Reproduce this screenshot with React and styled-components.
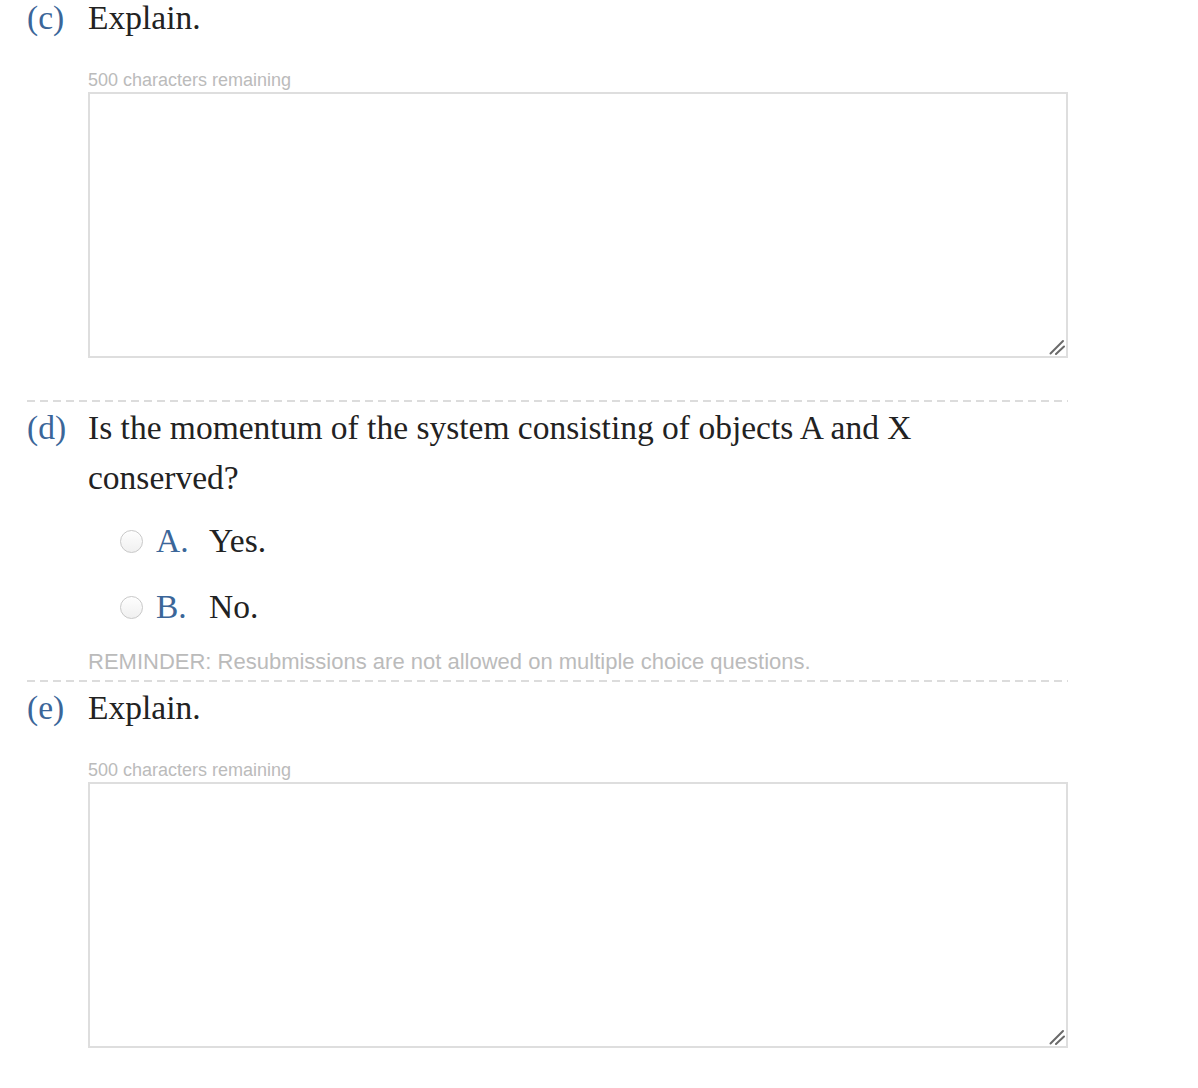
import styled, { createGlobalStyle } from "styled-components";

const GlobalStyle = createGlobalStyle`
  body {
    margin: 0;
    background: #fff;
    font-family: "Liberation Serif", serif;
    color: #222;
  }
`;

const questions = [
  { id: "c", kind: "text", prompt: "Explain." },
  {
    id: "d",
    kind: "choice",
    prompt: "Is the momentum of the system consisting of objects A and X conserved?",
    options: [
      { key: "A", text: "Yes." },
      { key: "B", text: "No." },
    ],
  },
  { id: "e", kind: "text", prompt: "Explain." },
];

const Grip = () => (
  <GripIcon width="16" height="16" viewBox="0 0 16 16">
    <line x1="1.5" y1="14.5" x2="14" y2="2" />
    <line x1="7" y1="15" x2="15" y2="7.5" />
  </GripIcon>
);

const TextAnswer = () => (
  <>
    <Counter>500 characters remaining</Counter>
    <BoxWrap>
      <Box />
      <Grip />
    </BoxWrap>
  </>
);

const ChoiceAnswer = ({ name, options }) => (
  <>
    <OptionList>
      {options.map((opt) => (
        <Option key={opt.key}>
          <Radio type="radio" name={name} />
          <OptionKey>{opt.key}.</OptionKey>
          <OptionText>{opt.text}</OptionText>
        </Option>
      ))}
    </OptionList>
    <Reminder>REMINDER: Resubmissions are not allowed on multiple choice questions.</Reminder>
  </>
);

const App = () => {
  return (
    <>
      <GlobalStyle />
      <Page>
        {questions.map((q, i) => (
          <Part key={q.id} $first={i === 0}>
            <Label>({q.id})</Label>
            <Body>
              <Prompt>{q.prompt}</Prompt>
              {q.kind === "text" ? (
                <TextAnswer />
              ) : (
                <ChoiceAnswer name={q.id} options={q.options} />
              )}
            </Body>
          </Part>
        ))}
      </Page>
    </>
  );
};

const Page = styled.div`
  width: 1041px;
  margin-left: 27px;
  margin-top: -7px;
`;

const Part = styled.div`
  display: grid;
  grid-template-columns: 61px 1fr;
  padding-top: ${(p) => (p.$first ? "0" : "3px")};
  padding-bottom: ${(p) => (p.$first ? "42px" : "6px")};
  & + & {
    background-image: repeating-linear-gradient(
      to right,
      #dcdcdc 0,
      #dcdcdc 8px,
      transparent 8px,
      transparent 13px
    );
    background-size: 100% 2px;
    background-repeat: no-repeat;
  }
`;

const Label = styled.div`
  font-size: 33.5px;
  line-height: 50px;
  color: #3b6699;
  white-space: nowrap;
`;

const Body = styled.div`
  display: flex;
  flex-direction: column;
`;

const Prompt = styled.div`
  font-size: 33.5px;
  line-height: 50px;
  color: #222;
  max-width: 860px;
`;

const Counter = styled.div`
  margin-top: 29px;
  font-family: "Liberation Sans", sans-serif;
  font-size: 18px;
  line-height: 16px;
  color: #bbb;
  height: 20px;
`;

const BoxWrap = styled.div`
  position: relative;
  width: 980px;
`;

const Box = styled.textarea`
  box-sizing: border-box;
  width: 980px;
  height: 266px;
  border: 2px solid #dedede;
  resize: none;
  display: block;
  outline: none;
`;

const GripIcon = styled.svg`
  position: absolute;
  right: 3px;
  bottom: 3px;
  stroke: #6a6a6a;
  stroke-width: 2;
  stroke-linecap: round;
  pointer-events: none;
`;

const OptionList = styled.div`
  display: flex;
  flex-direction: column;
  gap: 22px;
  margin-top: 16px;
  padding-left: 32px;
`;

const Option = styled.label`
  display: flex;
  align-items: center;
  height: 44px;
  font-size: 33.5px;
`;

const Radio = styled.input`
  appearance: none;
  margin: 0 13px 0 0;
  width: 23px;
  height: 23px;
  border-radius: 50%;
  border: 1px solid #c8c8c8;
  background: linear-gradient(#fefefe, #f0f0f0);
  box-shadow: inset 0 1px 1px rgba(255, 255, 255, 0.8);
`;

const OptionKey = styled.span`
  color: #3b6699;
  width: 53px;
`;

const OptionText = styled.span`
  color: #222;
`;

const Reminder = styled.div`
  margin-top: 21px;
  font-family: "Liberation Sans", sans-serif;
  font-size: 22px;
  line-height: 24px;
  color: #bbb;
`;

export default App;
